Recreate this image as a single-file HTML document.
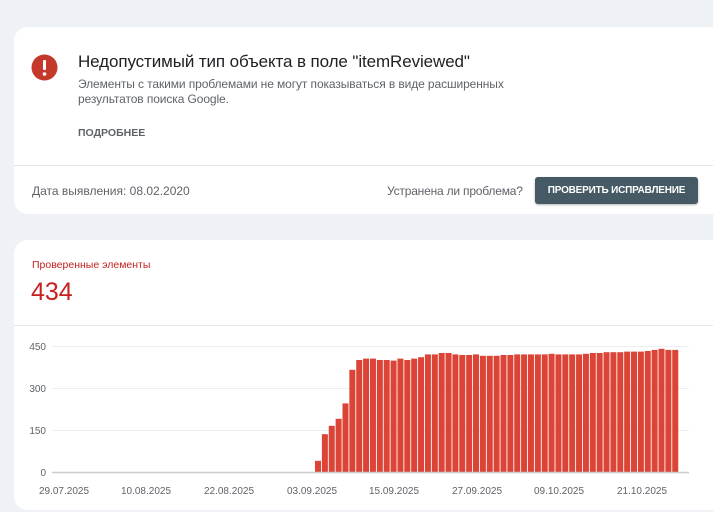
<!DOCTYPE html>
<html><head><meta charset="utf-8"><style>
body{margin:0;width:713px;height:512px;background:#eef2f7;font-family:"Liberation Sans",sans-serif;position:relative;overflow:hidden}
.card{position:absolute;left:14px;width:712px;background:#fff;border-radius:14px}
.t{position:absolute;white-space:nowrap}
</style></head><body>
<div class="card" style="top:27px;height:187px">
  <svg class="t" style="left:17px;top:27px" width="27" height="27"><circle cx="13.5" cy="13.5" r="13" fill="#c5392a"/><rect x="12" y="6" width="3" height="10" rx="1" fill="#fff"/><circle cx="13.5" cy="20" r="1.8" fill="#fff"/></svg>
  <div class="t" style="left:64px;top:25px;font-size:17px;letter-spacing:-0.1px;color:#202124">Недопустимый тип объекта в поле "itemReviewed"</div>
  <div class="t" style="left:64px;top:50px;font-size:12px;letter-spacing:-0.1px;line-height:15px;color:#5f6368">Элементы с такими проблемами не могут показываться в виде расширенных<br>результатов поиска Google.</div>
  <div class="t" style="left:64px;top:100px;font-size:10.5px;font-weight:bold;color:#5f6368">ПОДРОБНЕЕ</div>
  <div style="position:absolute;left:0;right:0;top:138px;border-top:1px solid #e3e3e3"></div>
  <div class="t" style="left:18px;top:157px;font-size:12px;color:#5f6368">Дата выявления: 08.02.2020</div>
  <div class="t" style="left:373px;top:157px;font-size:12px;letter-spacing:-0.2px;color:#5f6368">Устранена ли проблема?</div>
  <div class="t" style="left:521px;top:150px;width:163px;height:27px;background:#455a64;border-radius:3px;box-shadow:0 1px 2px rgba(0,0,0,.3);color:#fff;font-size:10px;letter-spacing:-0.2px;font-weight:bold;line-height:27px;text-align:center">ПРОВЕРИТЬ ИСПРАВЛЕНИЕ</div>
</div>
<div class="card" style="top:240px;height:270px">
  <div class="t" style="left:18px;top:19px;font-size:10.5px;color:#c5221f">Проверенные элементы</div>
  <div class="t" style="left:17px;top:38px;font-size:25px;color:#c5221f">434</div>
  <div style="position:absolute;left:0;right:0;top:85px;border-top:1px solid #e8e8e8"></div>
</div>
<svg style="position:absolute;left:0;top:0" width="713" height="512" font-family="Liberation Sans, sans-serif" font-size="10" fill="#5f6368">
<g stroke="#eceff1" stroke-width="1"><line x1="52" x2="689" y1="346.5" y2="346.5"/><line x1="52" x2="689" y1="388.5" y2="388.5"/><line x1="52" x2="689" y1="430.5" y2="430.5"/></g>
<g text-anchor="end"><text x="46" y="350">450</text><text x="46" y="392">300</text><text x="46" y="434">150</text><text x="46" y="476">0</text></g>
<g id="bars" fill="#db4437"></g>
<line x1="52" x2="689" y1="472.5" y2="472.5" stroke="#ccc" stroke-width="1.5"/>
<g text-anchor="middle"><text x="64" y="494">29.07.2025</text><text x="146" y="494">10.08.2025</text><text x="229" y="494">22.08.2025</text><text x="312" y="494">03.09.2025</text><text x="394" y="494">15.09.2025</text><text x="477" y="494">27.09.2025</text><text x="559" y="494">09.10.2025</text><text x="642" y="494">21.10.2025</text></g>
</svg>
<script>
var v=[40,135,165,190,245,365,400,405,405,400,400,398,405,400,405,410,420,420,425,425,420,418,418,420,415,415,415,418,418,420,420,420,420,420,422,420,420,420,420,422,425,425,428,428,428,430,430,430,432,436,440,436,436];
var g=document.getElementById('bars'),s='';
for(var i=0;i<v.length;i++){var h=v[i]*0.28;s+='<rect x="'+(315+i*6.87).toFixed(2)+'" y="'+(472-h).toFixed(1)+'" width="6" height="'+h.toFixed(1)+'"/>';}
g.innerHTML=s;
</script>
</body></html>
